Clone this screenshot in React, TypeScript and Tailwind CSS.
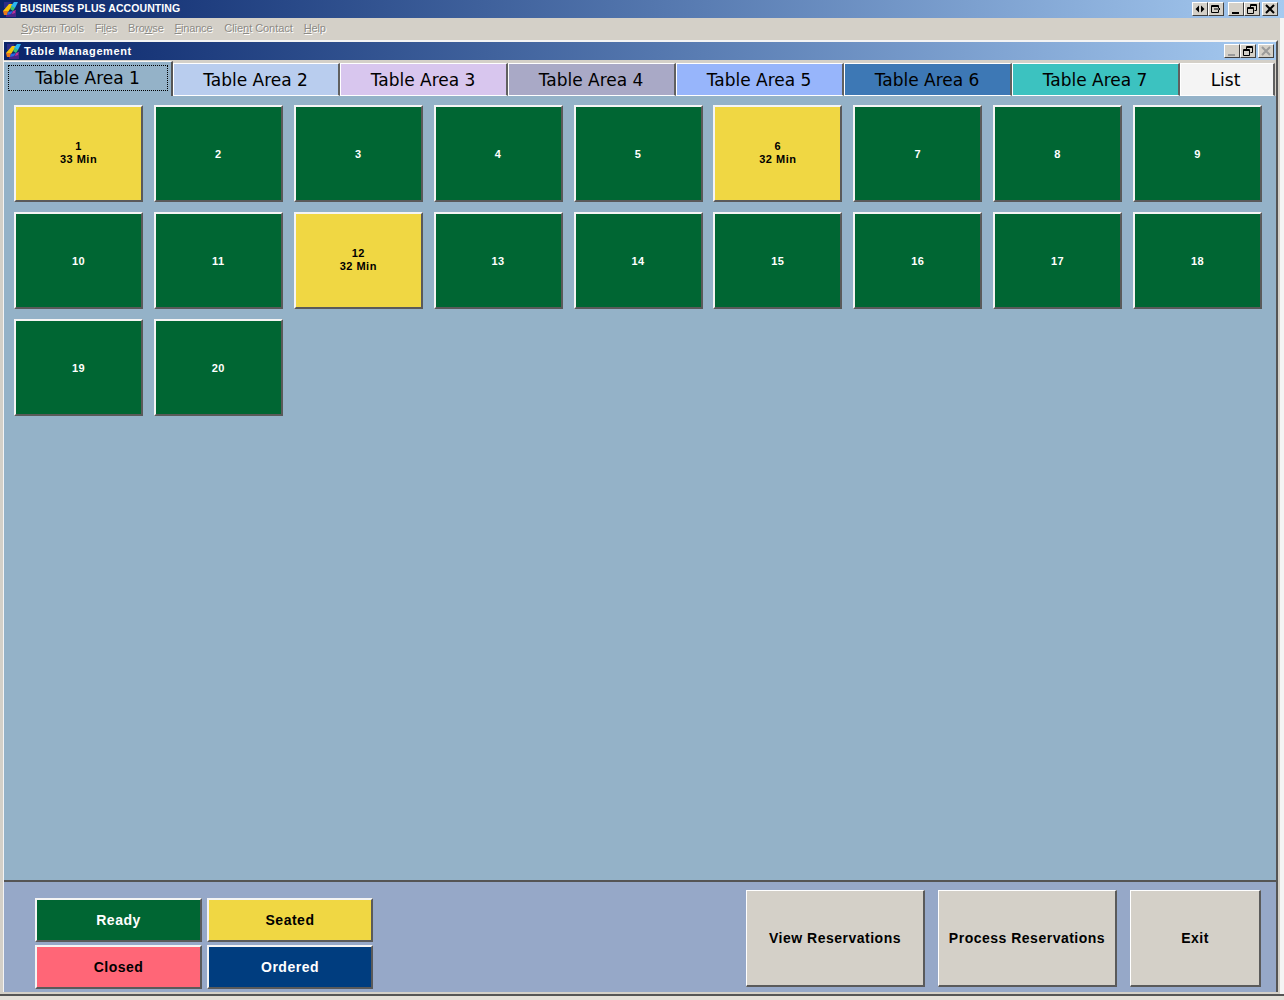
import React from 'react';

const tabs = [
  { label: 'Table Area 1', bg: 'bg-[#94b2c8]', w: 'w-[169px]', active: true, extra: '' },
  { label: 'Table Area 2', bg: 'bg-[#b9cdee]', w: 'w-[167px]', extra: 'pr-[1px]' },
  { label: 'Table Area 3', bg: 'bg-[#d8c6ee]', w: 'w-[168px]', extra: 'pr-[1px]' },
  { label: 'Table Area 4', bg: 'bg-[#a9a9c6]', w: 'w-[168px]', extra: 'pr-[1px]' },
  { label: 'Table Area 5', bg: 'bg-[#97b5fb]', w: 'w-[168px]', extra: 'pr-[1px]' },
  { label: 'Table Area 6', bg: 'bg-[#3d78b5]', w: 'w-[168px]', extra: 'pr-[1px]' },
  { label: 'Table Area 7', bg: 'bg-[#3cc2c0]', w: 'w-[168px]', extra: 'pr-[1px]' },
  { label: 'List', bg: 'bg-[#f4f4f4]', w: 'w-[95px]', extra: 'pr-[3px]' },
];

const seated: Record<number, string> = { 1: '33 Min', 6: '32 Min', 12: '32 Min' };
const tables = Array.from({ length: 20 }, (_, i) => i + 1);

const raised = 'border-2 border-t-[#f4f4f4] border-l-[#f4f4f4] border-r-[#5a5a5a] border-b-[#5a5a5a]';

const Logo = () => (
  <svg width="17" height="17" viewBox="0 0 17 17" className="shrink-0">
    <rect x="2" y="1" width="7" height="6" fill="#2c2c86" />
    <rect x="4" y="11" width="10" height="5" fill="#4a2488" />
    <path d="M1 10 L7 3 L11 3 L8 8 L6 11 L2 11 Z" fill="#f6c40c" />
    <path d="M9 5 L12 1 L16 1 L13 7 L10 7 Z" fill="#2ab6f2" />
    <path d="M8 8 L10 5 L13 7 L11 10 Z" fill="#3cc070" />
    <path d="M1 10 L6 10 L5 14 L2 14 Z" fill="#e87818" />
    <path d="M6 11 L11 10 L9 13 L5 14 Z" fill="#2468e0" />
    <path d="M11 10 L14 9 L13 12 L10 13 Z" fill="#c03098" />
  </svg>
);

const glyphs: Record<string, React.ReactNode> = {
  resize: <path d="M2.5 7 L6 3.5 L6 10.5 Z M11.5 7 L8 3.5 L8 10.5 Z M6.5 3 V11 M7.5 3 V11" fill="currentColor" stroke="none" />,
  exit: <path d="M2.5 3.5 H9.5 V5 M2.5 3.5 V10.5 H9.5 V9 M2.5 4.5 H9.5 M5 7 H11 M9 5 L11 7 L9 9" fill="none" stroke="currentColor" />,
  min: <path d="M3 11 H10" fill="none" stroke="currentColor" strokeWidth="2" />,
  restore: <path d="M5.5 2.5 H11.5 V8.5 H9.5 M5.5 2.5 V5 M5.5 3.5 H11.5 M2.5 5.5 H8.5 V11.5 H2.5 Z M2.5 6.5 H8.5" fill="none" stroke="currentColor" />,
  close: <path d="M3 3 L11 11 M11 3 L3 11" fill="none" stroke="currentColor" strokeWidth="2" />,
};

const CtlButton = ({ kind, muted }: { kind: string; muted?: boolean }) => (
  <div className={`w-4 h-[14px] bg-[#d4d0c8] border border-t-white border-l-white border-r-[#404040] border-b-[#404040] flex items-center justify-center ${muted ? 'text-[#9a9a9a]' : 'text-black'}`}>
    <svg width="14" height="14" viewBox="0 0 14 14" className="shrink-0">{glyphs[kind]}</svg>
  </div>
);

const TableButton = ({ n }: { n: number }) => {
  const time = seated[n];
  return (
    <button className={`w-[129px] h-[97px] ${raised} flex flex-col items-center justify-center text-[11px] leading-[13px] font-bold tracking-[0.5px] ${time ? 'pb-[2px] bg-[#f0d743] text-black' : 'pt-[2px] bg-[#006633] text-white'}`}>
      <span>{n}</span>
      {time && <span>{time}</span>}
    </button>
  );
};

const Legend = ({ label, cls }: { label: string; cls: string }) => (
  <div className={`h-[44px] ${raised} ${cls} flex items-center justify-center text-[14px] font-bold tracking-[0.5px]`}>{label}</div>
);

const Action = ({ label, w }: { label: string; w: string }) => (
  <button className={`${w} h-[97px] bg-[#d4d0c8] border-t border-l border-r-2 border-b-2 border-t-white border-l-white border-r-[#5a5a5a] border-b-[#5a5a5a] text-[14px] font-bold tracking-[0.5px] text-black`}>{label}</button>
);

export default function App() {
  return (
    <div className="w-[1284px] h-[1000px] bg-[#f4f4f4] flex flex-col overflow-hidden font-['Liberation_Sans',sans-serif]">
      <div className="h-[18px] shrink-0 flex items-center bg-gradient-to-r from-[#0a246a] to-[#a6caf0] pl-[2px] pr-[6px]">
        <Logo />
        <span className="ml-[1px] text-white text-[10.5px] font-bold tracking-[0.08px]">BUSINESS PLUS ACCOUNTING</span>
        <div className="ml-auto flex">
          <CtlButton kind="resize" />
          <CtlButton kind="exit" />
          <div className="w-[4px]" />
          <CtlButton kind="min" />
          <CtlButton kind="restore" />
          <div className="w-[2px]" />
          <CtlButton kind="close" />
        </div>
      </div>
      <div className="w-[1280px] h-[976px] shrink-0 bg-[#d4d0c8] flex flex-col">
        <div className="h-[22px] shrink-0 flex items-center pl-[21px] pb-[2px] gap-[11px] text-[11px] tracking-[-0.2px] text-[#8c8a85] [text-shadow:1px_1px_0_#ffffff]">
          <span><u>S</u>ystem Tools</span>
          <span>Fi<u>l</u>es</span>
          <span>Bro<u>w</u>se</span>
          <span><u>F</u>inance</span>
          <span className="ml-[1px] tracking-[-0.05px]">Clie<u>n</u>t Contact</span>
          <span><u>H</u>elp</span>
        </div>
        <div className="flex-1 flex flex-col ml-[3px] mr-[2px] mb-[2px] border-t-2 border-t-[#f4f4f4] border-l border-l-[#f4f4f4] border-r-2 border-r-[#555555]">
          <div className="h-[18px] shrink-0 flex items-center bg-gradient-to-r from-[#0a246a] to-[#a6caf0] pl-[1px] pr-[2px]">
            <Logo />
            <span className="ml-[2px] text-white text-[11px] font-bold tracking-[0.6px]">Table Management</span>
            <div className="ml-auto flex">
              <CtlButton kind="min" muted />
              <CtlButton kind="restore" />
              <div className="w-[2px]" />
              <CtlButton kind="close" muted />
            </div>
          </div>
          <div className="flex h-[36px] shrink-0 pt-[1px] font-['DejaVu_Sans',sans-serif]">
            {tabs.map((t) =>
              t.active ? (
                <div key={t.label} className={`${t.w} ${t.bg} relative flex items-center justify-center text-[17px] text-black border-r-2 border-r-[#555555] border-t border-t-[#f4f4f4]`}>
                  <div className="absolute left-[4px] right-[3px] top-[3px] bottom-[5px] border border-dotted border-black" />
                  {t.label}
                </div>
              ) : (
                <div key={t.label} className={`${t.w} ${t.bg} ${t.extra} mt-[2px] pt-[2px] flex items-center justify-center text-[17px] text-black border-t border-t-white border-l border-l-white border-b border-b-white border-r-2 border-r-[#606060]`}>
                  {t.label}
                </div>
              )
            )}
            <div className="flex-1 mt-[2px]" />
          </div>
          <div className="flex-1 bg-[#94b2c8] pl-[10px] pt-[9px]">
            <div className="grid grid-cols-[repeat(9,129px)] gap-x-[10.875px] gap-y-[10px]">
              {tables.map((n) => (
                <TableButton key={n} n={n} />
              ))}
            </div>
          </div>
          <div className="h-[112px] shrink-0 bg-[#96a8c8] border-t-2 border-t-[#555555] flex items-start pl-[31px]">
            <div className="grid grid-cols-[167px_166px] gap-x-[5px] gap-y-[3px] mt-[16px]">
              <Legend label="Ready" cls="bg-[#006633] text-white" />
              <Legend label="Seated" cls="bg-[#f0d743] text-black" />
              <Legend label="Closed" cls="bg-[#ff6677] text-black" />
              <Legend label="Ordered" cls="bg-[#003d7f] text-white" />
            </div>
            <div className="ml-auto flex gap-[13px] pr-[15px] mt-[8px]">
              <Action label="View Reservations" w="w-[179px]" />
              <Action label="Process Reservations" w="w-[179px]" />
              <Action label="Exit" w="w-[131px]" />
            </div>
          </div>
        </div>
      </div>
      <div className="h-[2px] shrink-0 bg-[#555555]" />
      <div className="flex-1 bg-[#e4e1da]" />
    </div>
  );
}
